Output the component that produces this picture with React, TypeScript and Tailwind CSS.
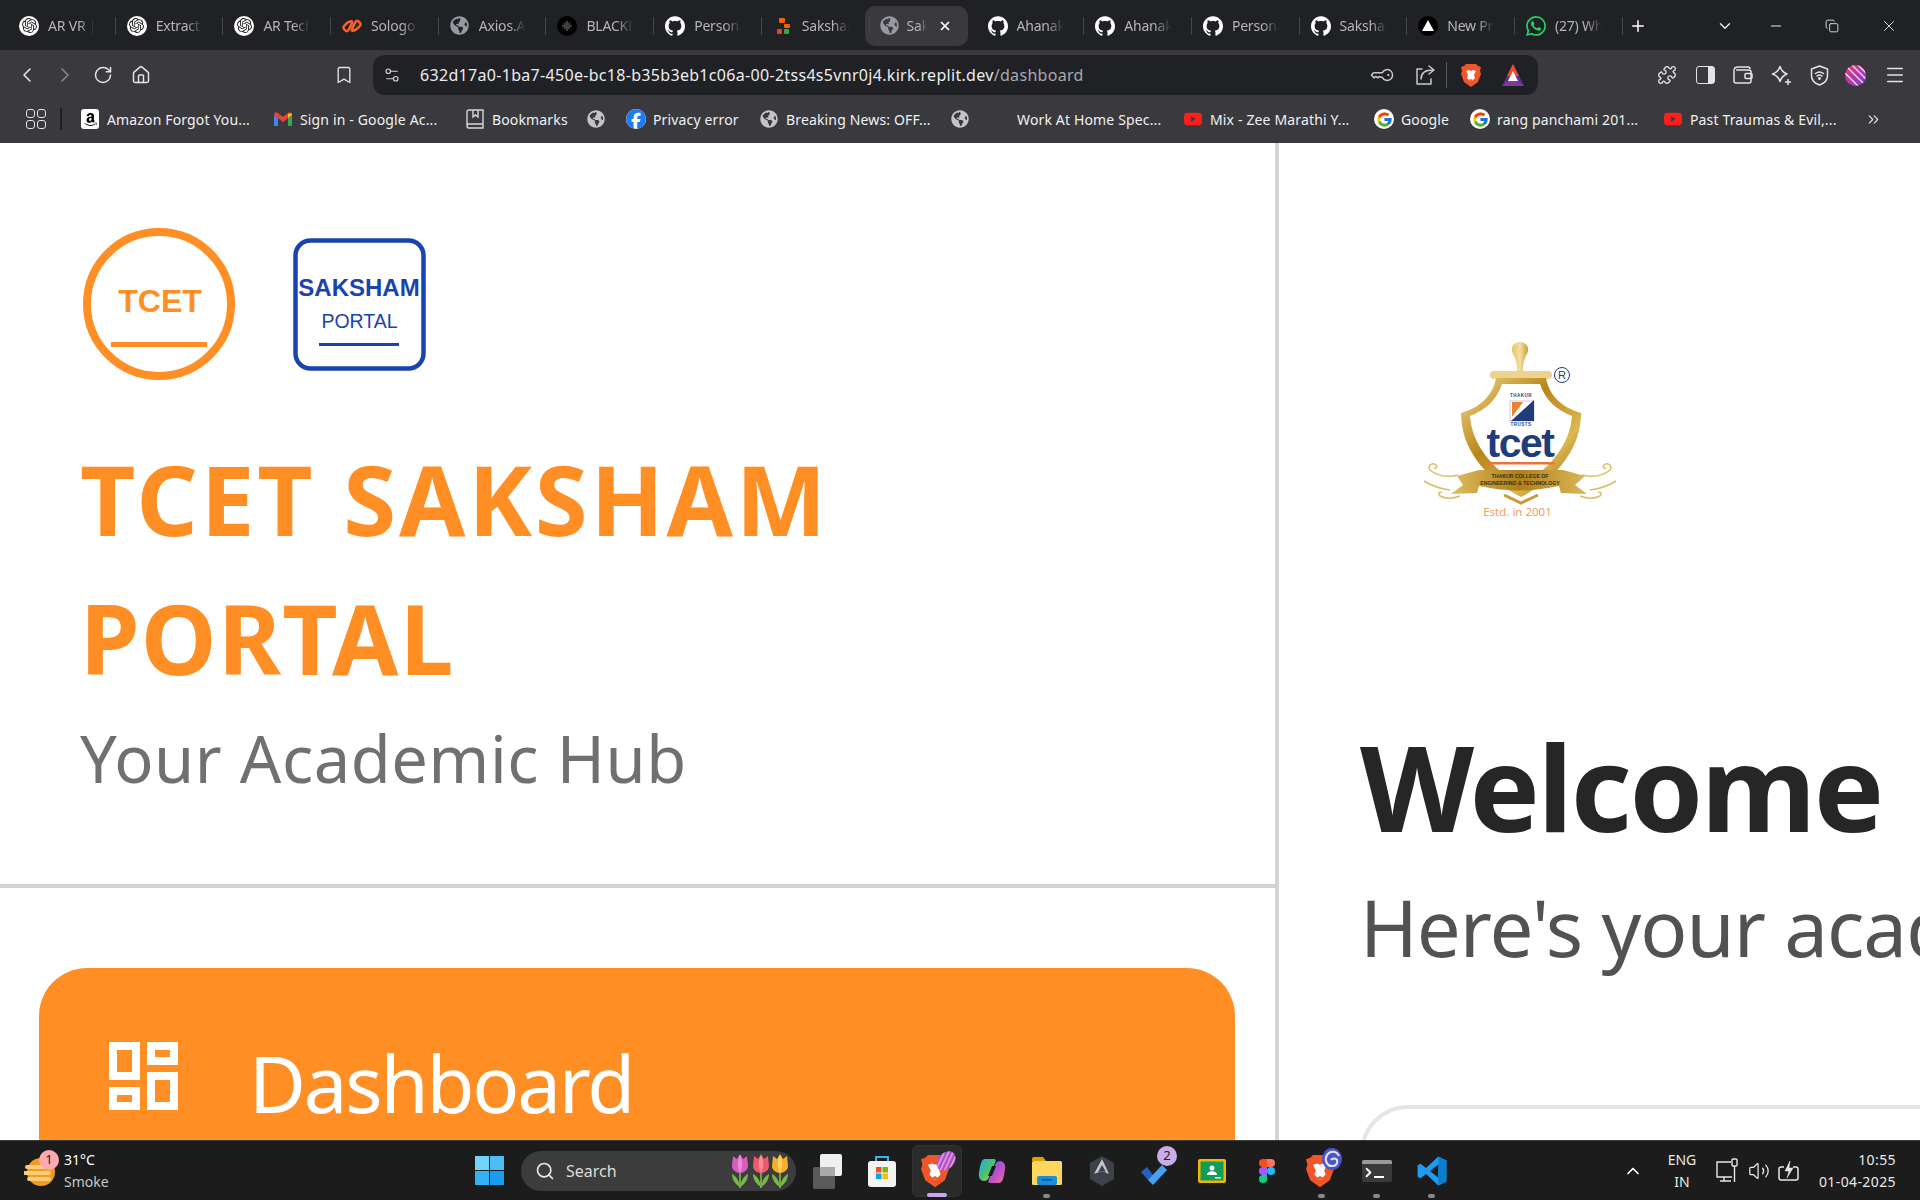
import React from "react";
import {
  ChevronLeft, ChevronRight, RotateCw, Home, Bookmark, Settings2, KeyRound, Puzzle, Menu,
  ChevronsRight, Search, ChevronUp, ChevronDown, Minus, Copy, X, Plus, Volume2,
} from "lucide-react";
import { SiOpenai, SiGithub, SiWhatsapp, SiFacebook, SiYoutube } from "react-icons/si";
import { FaGlobeAmericas, FaAmazon } from "react-icons/fa";
import { FcGoogle } from "react-icons/fc";

const Gpt = () => (
  <span className="w-[20px] h-[20px] rounded-full bg-white flex items-center justify-center">
    <SiOpenai className="w-[15px] h-[15px] text-[#222]" />
  </span>
);
const Git = () => <SiGithub className="w-[20px] h-[20px] text-white" />;
const Globe = ({ c = "text-[#c4c4c6]" }: { c?: string }) => <FaGlobeAmericas className={`w-[18px] h-[18px] ${c}`} />;
const TabGlobe = () => <FaGlobeAmericas className="w-[19px] h-[19px] text-[#949aa2]" />;
const Sologo = () => (
  <svg width="21" height="20" viewBox="0 0 21 20" fill="none" stroke="#f9622a" strokeWidth="2.600">
    <path d="M3 14c-2-1-2-3 0-5s5-4 7-4c1 0 1 1 0 3l-3 6c-1 2-3 2-4 0z" />
    <path d="M18 6c2 1 2 3 0 5s-5 4-7 4c-1 0-1-1 0-3l3-6c1-2 3-2 4 0z" />
  </svg>
);
const Blackbox = () => (
  <svg width="20" height="20" viewBox="0 0 20 20">
    <circle cx="10" cy="10" r="10" fill="#000" />
    {[6, 8, 10, 12, 14].map((x) => [6, 8, 10, 12, 14].map((y) => <circle key={`${x}-${y}`} cx={x} cy={y} r={Math.abs(x - 10) + Math.abs(y - 10) > 5 ? 0.3 : 0.7} fill="#b0b0b0" />))}
  </svg>
);
const Saksha = () => (
  <svg width="20" height="20" viewBox="0 0 20 20">
    <rect x="6" y="2" width="6" height="5" rx="1" fill="#f26207" />
    <rect x="11" y="8" width="6" height="4" rx="1" fill="#f26207" />
    <rect x="4" y="13" width="5" height="5" rx="1" fill="#e8402c" />
    <rect x="11" y="13" width="5" height="5" rx="1" fill="#35a853" />
  </svg>
);
const Vercel = () => (
  <span className="w-[20px] h-[20px] rounded-full bg-black flex items-center justify-center">
    <svg width="12" height="11" viewBox="0 0 12 11"><path d="M6 0l6 11H0z" fill="#fff" /></svg>
  </span>
);
const Whats = () => <SiWhatsapp className="w-[20px] h-[20px] text-[#25d366]" />;

const Lion = ({ s = 20 }: { s?: number }) => (
  <svg width={s} height={s * 1.15} viewBox="0 0 20 23">
    <path d="M5 0h10l2 2 3 1-1 4 1 3-3 8-7 5-7-5-3-8 1-3-1-4 3-1z" fill="#f0562a" />
    <path d="M5 7l3-1 2 1 2-1 3 1-2 4 1 3-4 4-4-4 1-3z" fill="#fff" />
    <path d="M8 16l2-1 2 1-2 2z" fill="#f0562a" />
  </svg>
);
const Bat = () => (
  <svg width="24" height="24" viewBox="0 0 24 24">
    <path d="M12 1 23 23H1z" fill="#6c2a90" />
    <path d="M12 1 18 13H6z" fill="#ef4b2f" />
    <path d="M12 8l5 10H7z" fill="#fff" />
    <path d="M1 23l6-5h10l6 5z" fill="#7b3aa0" />
  </svg>
);
const Avatar = () => (
  <svg width="21" height="21" viewBox="0 0 21 21">
    <defs>
      <linearGradient id="avg" x1="0" y1="0" x2="1" y2="1">
        <stop offset="0" stopColor="#f5307a" />
        <stop offset="1" stopColor="#7a3de0" />
      </linearGradient>
      <clipPath id="avc"><circle cx="10.500" cy="10.500" r="10.500" /></clipPath>
    </defs>
    <circle cx="10.500" cy="10.500" r="10.500" fill="url(#avg)" />
    <g clipPath="url(#avc)" stroke="#f4e6f6" strokeWidth="1.300">
      <path d="M-2 6 15 23M1 1 20 20M6 -1 24 17M11 -2 26 13" />
    </g>
  </svg>
);

const Tab = ({ icon, label }: { icon: React.ReactNode; label: string }) => (
  <div className="relative w-[107.7px] shrink-0 h-[40px] flex items-center pl-[11px]">
    <span className="w-[20px] h-[20px] flex items-center justify-center shrink-0">{icon}</span>
    <span className="ml-[9px] w-[47px] overflow-hidden whitespace-nowrap text-[14px] tracking-[-0.2px] text-[#b5b5b7] [mask-image:linear-gradient(to_right,black_65%,transparent)]">{label}</span>
    <span className="absolute right-0 top-[11px] w-px h-[18px] bg-[#45454a]" />
  </div>
);
const ActiveTab = () => (
  <div className="ml-[-5px] mr-[9px] w-[103px] shrink-0 h-[40px] flex items-center bg-[#3a3a3e] rounded-[10px] pl-[15px]">
    <span className="w-[20px] h-[20px] flex items-center justify-center shrink-0"><TabGlobe /></span>
    <span className="ml-[7px] w-[20px] overflow-hidden whitespace-nowrap text-[14px] tracking-[-0.2px] text-[#b5b5b7] [mask-image:linear-gradient(to_right,black_60%,transparent)]">Saksham</span>
    <X className="ml-[11px] w-[14px] h-[14px] text-white" strokeWidth={3} />
  </div>
);

const TabBar = () => (
  <div className="h-[50px] shrink-0 bg-[#202125] flex items-center pl-[8px] pt-[1px]">
    <Tab icon={<Gpt />} label="AR VR |" />
    <Tab icon={<Gpt />} label="Extract text" />
    <Tab icon={<Gpt />} label="AR Tech stack" />
    <Tab icon={<Sologo />} label="Sologo AI" />
    <Tab icon={<TabGlobe />} label="Axios.Axios" />
    <Tab icon={<Blackbox />} label="BLACKBOX" />
    <Tab icon={<Git />} label="Personal" />
    <Tab icon={<Saksha />} label="Saksham" />
    <ActiveTab />
    <Tab icon={<Git />} label="Ahanak" />
    <Tab icon={<Git />} label="Ahanak" />
    <Tab icon={<Git />} label="Personal" />
    <Tab icon={<Git />} label="Saksham" />
    <Tab icon={<Vercel />} label="New Project" />
    <Tab icon={<Whats />} label="(27) WhatsApp" />
    <Plus className="ml-[6px] w-[18px] h-[18px] text-white" />
    <ChevronDown className="ml-[69px] w-[18px] h-[18px] text-[#e8e8e8]" />
    <Minus className="ml-[34px] w-[16px] h-[16px] text-[#e8e8e8]" strokeWidth={1.5} />
    <Copy className="ml-[41px] w-[14px] h-[14px] text-[#e8e8e8]" strokeWidth={1.5} />
    <X className="ml-[41px] w-[18px] h-[18px] text-[#e8e8e8]" strokeWidth={1.2} />
  </div>
);

const Slot = ({ children }: { children: React.ReactNode }) => (
  <span className="w-[38px] h-[38px] shrink-0 flex items-center justify-center">{children}</span>
);

const ic = "w-[20px] h-[20px] text-[#e4e4e6]";

const ShareOut = () => (
  <svg width="22" height="22" viewBox="0 0 22 22" fill="none" stroke="#c8c8ca" strokeWidth="1.500" strokeLinecap="round" strokeLinejoin="round">
    <path d="M8 5H3v15h14v-5" />
    <path d="M7 15c0-6 4-9 12-9M15 2l5 4-5 4" />
  </svg>
);
const SidePanel = () => (
  <span className="w-[19px] h-[18px] border-[1.5px] border-[#e4e4e6] rounded-[3px] flex justify-end">
    <span className="w-[6px] h-full bg-[#e4e4e6]" />
  </span>
);
const WalletI = () => (
  <svg width="20" height="18" viewBox="0 0 20 18" fill="none" stroke="#e4e4e6" strokeWidth="1.500" strokeLinejoin="round">
    <path d="M1 4.500C1 2 3 1 5 1h10c1.500 0 2 1 2 2" />
    <path d="M1 4.500V15a2 2 0 0 0 2 2h13a2 2 0 0 0 2-2v-9a2 2 0 0 0-2-2H3" />
    <rect x="12" y="7.500" width="7" height="5" rx="1" />
  </svg>
);
const Leo = () => (
  <svg width="21" height="21" viewBox="0 0 21 21" fill="none" stroke="#e4e4e6" strokeWidth="1.500" strokeLinejoin="round">
    <path d="M9 1.500c1.200 4 3 6 7 7.500-4 1.500-5.800 3.500-7 7.500C7.800 12.500 6 10.500 1.500 9 6 7.500 7.800 5.500 9 1.500z" />
    <path d="M17 14v6M14 17h6" />
  </svg>
);
const Vpn = () => (
  <svg width="19" height="21" viewBox="0 0 19 21" fill="none" stroke="#e4e4e6" strokeWidth="1.500" strokeLinecap="round">
    <path d="M9.500 1 17.500 4v6.500c0 4.500-3.500 8-8 9.500-4.500-1.500-8-5-8-9.500V4z" strokeLinejoin="round" />
    <path d="M5.500 8.500c2.500-2 5.500-2 8 0M7 11c1.500-1.200 3.500-1.200 5 0" />
    <circle cx="9.500" cy="13.500" r="0.700" fill="#e4e4e6" />
  </svg>
);

const Toolbar = () => (
  <div className="h-[50px] shrink-0 bg-[#3a3a3e] flex items-center pl-[8px]">
    <Slot><ChevronLeft className="w-[24px] h-[24px] text-[#e4e4e6]" strokeWidth={1.6} /></Slot>
    <Slot><ChevronRight className="w-[24px] h-[24px] text-[#85858a]" strokeWidth={1.6} /></Slot>
    <Slot><RotateCw className={ic} strokeWidth={1.8} /></Slot>
    <Slot><Home className={ic} strokeWidth={1.8} /></Slot>
    <div className="ml-[165px]"><Slot><Bookmark className={ic} strokeWidth={1.6} /></Slot></div>
    <div className="ml-[10px] w-[1165px] h-[40px] bg-[#202125] rounded-[12px] flex items-center relative">
      <Settings2 className="ml-[10px] w-[18px] h-[18px] text-[#d0d0d2]" strokeWidth={1.6} />
      <span className="ml-[19px] text-[16px] tracking-[0.31px] text-[#ececee] whitespace-nowrap">
        632d17a0-1ba7-450e-bc18-b35b3eb1c06a-00-2tss4s5vnr0j4.kirk.replit.dev<span className="text-[#a8a8ac]">/dashboard</span>
      </span>
      <span className="ml-auto flex items-center">
        <KeyRound className="w-[20px] h-[20px] text-[#c8c8ca] rotate-45" strokeWidth={1.8} />
        <span className="ml-[21px] flex"><ShareOut /></span>
        <span className="ml-[10px] w-px h-[26px] bg-[#55555a]" />
        <span className="ml-[14px] flex"><Lion s={20} /></span>
        <span className="ml-[20px] mr-[13px] flex"><Bat /></span>
      </span>
    </div>
    <div className="ml-[110px] flex">
      <Slot><Puzzle className={ic} strokeWidth={1.6} /></Slot>
      <Slot><SidePanel /></Slot>
      <Slot><WalletI /></Slot>
      <Slot><Leo /></Slot>
      <Slot><Vpn /></Slot>
      <span className="-ml-[2px] mr-[2px]"><Slot><Avatar /></Slot></span>
      <Slot><Menu className="w-[22px] h-[22px] text-[#e4e4e6]" strokeWidth={1.6} /></Slot>
    </div>
  </div>
);

const Yt = () => <SiYoutube className="w-[18px] h-[18px] text-[#ff1f1f]" />;
const G = () => (
  <span className="w-[20px] h-[20px] rounded-full bg-white flex items-center justify-center"><FcGoogle className="w-[17px] h-[17px]" /></span>
);
const Amazon = () => (
  <span className="w-[18px] h-[20px] rounded-[3px] bg-white flex items-center justify-center"><FaAmazon className="w-[15px] h-[15px] text-black" /></span>
);
const Gm = () => (
  <svg width="18" height="14" viewBox="0 0 18 14">
    <path d="M0 3v10a1 1 0 0 0 1 1h3V6z" fill="#4285f4" />
    <path d="M18 3v10a1 1 0 0 1-1 1h-3V6z" fill="#34a853" />
    <path d="M0 3l4 3 5 4 5-4 4-3c0-2.400-2-3.400-3.500-2.200L9 5 3.500 .8C2 -.4 0 .6 0 3z" fill="#ea4335" />
    <path d="M14 6V1.700L18 1.500V3z" fill="#fbbc04" />
  </svg>
);

const Mark = ({ icon, label, w }: { icon?: React.ReactNode; label?: string; w: string }) => (
  <div className={`${w} shrink-0 flex items-center h-full overflow-hidden`}>
    {icon && <span className="w-[20px] h-[20px] mr-[7px] flex items-center justify-center shrink-0">{icon}</span>}
    {label && <span className="text-[14px] tracking-[0.15px] text-[#f0f0f2] whitespace-nowrap">{label}</span>}
  </div>
);

const BookmarkBox = () => (
  <svg width="20" height="20" viewBox="0 0 20 20" fill="none" stroke="#d8d8da" strokeWidth="1.400">
    <path d="M2 16V3a2 2 0 0 1 2-2h14v14H4a2 2 0 0 0 0 4h14v-4" />
    <path d="M8 1v7l2.500-2L13 8V1" />
  </svg>
);

const Bookmarks = () => (
  <div className="h-[43px] shrink-0 bg-[#3a3a3e] flex items-center pl-[26px] pb-[5px]">
    <div className="grid grid-cols-2 gap-[2px] w-[20px] h-[20px] mr-[14px]">
      <span className="border-[1.5px] border-[#e4e4e6] rounded-[3px]" />
      <span className="border-[1.5px] border-[#e4e4e6] rounded-[3px]" />
      <span className="border-[1.5px] border-[#e4e4e6] rounded-[3px]" />
      <span className="border-[1.5px] border-[#e4e4e6] rounded-[3px]" />
    </div>
    <span className="w-[2px] h-[22px] bg-[#1e1e20] mr-[18px]" />
    <Mark w="w-[193px]" icon={<Amazon />} label="Amazon Forgot You..." />
    <Mark w="w-[192px]" icon={<Gm />} label="Sign in - Google Ac..." />
    <Mark w="w-[121px]" icon={<BookmarkBox />} label="Bookmarks" />
    <Mark w="w-[40px]" icon={<Globe />} />
    <Mark w="w-[133px]" icon={<SiFacebook className="w-[20px] h-[20px] text-[#1b7cf2] bg-white rounded-full" />} label="Privacy error" />
    <Mark w="w-[191px]" icon={<Globe />} label="Breaking News: OFF..." />
    <Mark w="w-[67px]" icon={<Globe />} />
    <Mark w="w-[166px]" label="Work At Home Spec..." />
    <Mark w="w-[191px]" icon={<Yt />} label="Mix - Zee Marathi Y..." />
    <Mark w="w-[96px]" icon={<G />} label="Google" />
    <Mark w="w-[193px]" icon={<G />} label="rang panchami 201..." />
    <Mark w="w-[202px]" icon={<Yt />} label="Past Traumas & Evil,..." />
    <ChevronsRight className="w-[17px] h-[17px] text-[#e4e4e6]" strokeWidth={1.6} />
  </div>
);

const TcetLogo = () => (
  <svg width="152" height="152" viewBox="0 0 152 152">
    <circle cx="76" cy="76" r="72" fill="#fff" stroke="#ff8f24" strokeWidth="8" />
    <text x="77" y="84" textAnchor="middle" fontFamily="'Liberation Sans', sans-serif" fontWeight="700" fontSize="32" fill="#ff8f24">TCET</text>
    <rect x="28" y="114" width="96" height="5" fill="#ff8f24" />
  </svg>
);
const SakshamLogo = () => (
  <svg width="133" height="133" viewBox="0 0 133 133">
    <rect x="2.500" y="2.500" width="128" height="128" rx="15" fill="#fff" stroke="#1a44ad" strokeWidth="4.500" />
    <text x="66" y="58" textAnchor="middle" fontFamily="'Liberation Sans', sans-serif" fontWeight="700" fontSize="24" fill="#1a44ad">SAKSHAM</text>
    <text x="66.500" y="90" textAnchor="middle" fontFamily="'Liberation Sans', sans-serif" fontSize="19.500" fill="#1a44ad">PORTAL</text>
    <rect x="26" y="105" width="80" height="3" fill="#1a44ad" />
  </svg>
);

const Crest = () => (
  <svg width="240" height="200" viewBox="0 0 240 200">
    <defs>
      <linearGradient id="gold" x1="0" y1="0" x2="1" y2="1">
        <stop offset="0" stopColor="#f2d98c" />
        <stop offset="0.4" stopColor="#b98518" />
        <stop offset="0.7" stopColor="#dcb84e" />
        <stop offset="1" stopColor="#8f6210" />
      </linearGradient>
      <linearGradient id="rib" x1="0" y1="0" x2="1" y2="0">
        <stop offset="0" stopColor="#e0bd60" />
        <stop offset="0.5" stopColor="#ae7f18" />
        <stop offset="1" stopColor="#dcb858" />
      </linearGradient>
      <linearGradient id="fin" x1="0" y1="0" x2="1" y2="0">
        <stop offset="0" stopColor="#e6c66e" />
        <stop offset="0.5" stopColor="#f2dfa0" />
        <stop offset="1" stopColor="#c89c3a" />
      </linearGradient>
    </defs>
    <path d="M120 12c6 0 9 5 8 9-1 5-5 7-5 20h-6c0-13-4-15-5-20-1-4 2-9 8-9z" fill="url(#fin)" />
    <rect x="90" y="41" width="62" height="8" rx="4" fill="#ecd28e" />
    <path d="M96 48h50c3 17 15 29 35 35 0 34-22 64-60 84-38-20-60-50-60-84 20-6 32-18 35-35z" fill="url(#gold)" />
    <path d="M102 54h38c5 15 16 26 32 32-2 27-20 52-51 69-31-17-49-42-51-69 16-6 27-17 32-32z" fill="#fff" />
    <rect x="110" y="71" width="24" height="20" fill="#fff" stroke="#8a9ac0" strokeWidth="0.5" />
    <path d="M134 70v21h-23z" fill="#1f3d7a" />
    <path d="M112 72h11l-5 7-6 8z" fill="#f08030" />
    <text x="121" y="67" textAnchor="middle" fontFamily="'Liberation Sans', sans-serif" fontWeight="700" fontSize="4.500" letterSpacing="0.5" fill="#1f3d7a">THAKUR</text>
    <text x="121" y="95.500" textAnchor="middle" fontFamily="'Liberation Sans', sans-serif" fontWeight="700" fontSize="4.500" letterSpacing="0.5" fill="#1f3d7a">TRUSTS</text>
    <text x="120" y="127" textAnchor="middle" fontFamily="'Liberation Sans', sans-serif" fontWeight="700" fontSize="41" letterSpacing="-1.500" fill="#1f3d7a">tcet</text>
    <rect x="87" y="132" width="68" height="2.500" fill="#e8743a" />
    <path d="M57 146l22-6 84 0 22 6-10 9 12 9-26-1-2-7c-30 6-50 6-80 0l-2 7-26 1 12-9z" fill="url(#rib)" />
    <path d="M104 165l17 8 17-8" fill="none" stroke="#c89a38" strokeWidth="3" />
    <text x="120" y="148" textAnchor="middle" fontFamily="'Liberation Sans', sans-serif" fontWeight="700" fontSize="5.200" fill="#3a2e10">THAKUR COLLEGE OF</text>
    <text x="120" y="155" textAnchor="middle" fontFamily="'Liberation Sans', sans-serif" fontWeight="700" fontSize="5.200" fill="#3a2e10">ENGINEERING &amp; TECHNOLOGY</text>
    <path d="M58 145c-12 3-22 0-28-5-3-5 3-8 6-5 2 2 0 4-2 3M50 160c-8-1-18-4-26-9M60 166c-8 3-14 3-20 0-3-2 0-5 2-3" fill="none" stroke="#dcbc68" strokeWidth="1.500" />
    <path d="M182 145c12 3 22 0 28-5 3-5-3-8-6-5-2 2 0 4 2 3M190 160c8-1 18-4 26-9M180 166c8 3 14 3 20 0 3-2 0-5-2-3" fill="none" stroke="#dcbc68" strokeWidth="1.500" />
    <circle cx="162" cy="45" r="7.500" fill="#fff" stroke="#1f3d7a" strokeWidth="1" />
    <text x="162" y="49" textAnchor="middle" fontFamily="'Liberation Sans', sans-serif" fontSize="11" fill="#1f3d7a">R</text>
    <text x="117.500" y="186" textAnchor="middle" fontFamily="'Noto Sans', sans-serif" fontSize="11.500" fill="#f79a64">Estd. in 2001</text>
  </svg>
);

const DashIcon = () => (
  <svg width="69" height="68" viewBox="0 0 69 68" fill="none" stroke="#fff" strokeWidth="8">
    <rect x="4" y="4" width="23" height="30" />
    <rect x="42" y="4" width="23" height="15" />
    <rect x="42" y="34" width="23" height="30" />
    <rect x="4" y="49" width="23" height="15" />
  </svg>
);

const LeftPane = () => (
  <aside className="w-[1279px] shrink-0 border-r-4 border-[#d4d4d4]">
    <div className="h-[745px] border-b-4 border-[#d4d4d4] pl-[80px] pt-[85px]">
      <div className="flex items-center gap-[58px] ml-[3px]">
        <TcetLogo />
        <SakshamLogo />
      </div>
      <h1 className="mt-[49px] text-[96px] leading-[139px] font-bold text-[#ff8f24]">
        <span className="tracking-[2.8px]">TCET SAKSHAM</span><br />
        <span className="tracking-[1.2px]">PORTAL</span>
      </h1>
      <p className="mt-[11px] text-[65px] leading-[80px] tracking-[0.6px] text-[#707070]">Your Academic Hub</p>
    </div>
    <nav className="pl-[39px] pr-[40px] pt-[80px]">
      <div className="h-[400px] bg-[#ff8f24] rounded-[48px] flex items-start pl-[70px] pt-[74px] text-white">
        <DashIcon />
        <span className="ml-[71px] mt-[-9px] text-[78px] leading-[100px] tracking-[-2.2px]">Dashboard</span>
      </div>
    </nav>
  </aside>
);

const RightPane = () => (
  <main className="flex-1 min-w-0 overflow-hidden pl-[81px]">
    <div className="ml-[40px] mt-[187px]"><Crest /></div>
    <h2 className="mt-[187px] text-[118px] leading-[140px] font-bold tracking-[-2.2px] text-[#262626] whitespace-nowrap">Welcome</h2>
    <p className="mt-[20px] text-[78px] leading-[100px] tracking-[-1px] text-[#525252] whitespace-nowrap">Here's your academic overview</p>
    <div className="mt-[128px] w-[1000px] h-[400px] border-4 border-[#e5e5e5] rounded-[48px]" />
  </main>
);

const TSlot = ({ children, dot }: { children: React.ReactNode; dot?: boolean }) => (
  <div className="relative w-[55px] h-[52px] shrink-0 flex items-center justify-center">
    {children}
    {dot && <span className="absolute bottom-[-1px] w-[7px] h-[4px] rounded-full bg-[#8a8a8a]" />}
  </div>
);

const Tulip = ({ c, d, x }: { c: string; d: string; x: number }) => (
  <g transform={`translate(${x} 0)`}>
    <path d="M10 14v20" stroke="#6aa83a" strokeWidth="2" />
    <path d="M10 33c-4-2-8-7-8-13 4 2 7 6 8 13zM10 33c4-2 8-7 8-13-4 2-7 6-8 13z" fill="#7ab648" />
    <path d="M3 2l4 3 3-5 3 5 4-3 1 10c0 4-4 7-8 7s-8-3-8-7z" fill={c} />
    <path d="M10 1c3 5 3 12 0 18-3-6-3-13 0-18z" fill={d} />
  </g>
);

const Badge = ({ n, c, cls }: { n: string; c: string; cls: string }) => (
  <span className={`absolute w-[20px] h-[20px] rounded-full flex items-center justify-center text-[13px] text-[#222] ${c} ${cls}`}>{n}</span>
);

const Taskbar = () => (
  <div className="h-[60px] shrink-0 bg-[#1c1c1c] border-t border-[#3a3a3a] flex items-center text-white">
    <div className="relative w-[64px] h-full shrink-0">
      <svg className="absolute left-[24px] top-[14px]" width="32" height="34" viewBox="0 0 32 34">
        <circle cx="17" cy="17" r="14" fill="#f59a1c" />
        <path d="M3 12h22M1 18h24M5 24h20" stroke="#f5cf7c" strokeWidth="4" strokeLinecap="round" />
      </svg>
      <Badge n="1" c="bg-[#ffa8b0]" cls="left-[39px] top-[9px]" />
    </div>
    <div className="w-[400px] shrink-0 leading-[22px]">
      <div className="text-[14px]">31°C</div>
      <div className="text-[14px] text-[#c8c8c8]">Smoke</div>
    </div>
    <svg width="29" height="29" viewBox="0 0 29 29" className="ml-[11px]">
      <rect x="0" y="0" width="14" height="14" fill="#6fd3fb" />
      <rect x="15" y="0" width="14" height="14" fill="#4dbdf5" />
      <rect x="0" y="15" width="14" height="14" fill="#34b1f3" />
      <rect x="15" y="15" width="14" height="14" fill="#1a9cf0" />
    </svg>
    <div className="ml-[17px] w-[275px] h-[40px] shrink-0 rounded-full bg-[#3c3c3c] flex items-center pl-[14px]">
      <Search className="w-[20px] h-[20px] text-[#e8e8e8]" strokeWidth={2} />
      <span className="ml-[11px] text-[16px] text-[#dcdcdc]">Search</span>
      <svg width="60" height="34" viewBox="0 0 60 34" className="ml-auto mr-[6px]">
        <Tulip c="#d85cc0" d="#f08ad8" x="0" />
        <Tulip c="#ee5a6a" d="#f8909a" x="21" />
        <Tulip c="#f4b02c" d="#fbd060" x="40" />
      </svg>
    </div>
    <div className="ml-[3px] flex items-center">
      <TSlot>
        <svg width="30" height="36" viewBox="0 0 30 36">
          <rect x="1" y="14" width="22" height="22" rx="2" fill="#5a5a5a" />
          <rect x="8" y="1" width="22" height="22" rx="2" fill="#f0f0f0" />
          <rect x="8" y="14" width="15" height="9" fill="#a9a9a9" />
        </svg>
      </TSlot>
      <TSlot>
        <svg width="30" height="34" viewBox="0 0 30 34">
          <path d="M9 8V3h12v5" fill="none" stroke="#37b5f0" strokeWidth="2" />
          <rect x="1" y="7" width="28" height="26" rx="3" fill="#f4f4f4" />
          <rect x="9" y="13" width="5.500" height="5.500" fill="#f25022" />
          <rect x="15.500" y="13" width="5.500" height="5.500" fill="#7fba00" />
          <rect x="9" y="19.500" width="5.500" height="5.500" fill="#00a4ef" />
          <rect x="15.500" y="19.500" width="5.500" height="5.500" fill="#ffb900" />
        </svg>
      </TSlot>
      <div className="relative w-[50px] mx-[2.5px] h-[52px] shrink-0 flex items-center justify-center rounded-[6px] bg-[#2a2a2a] border border-[#333]">
        <span className="-ml-[4px] mt-[2px] flex"><Lion s={28} /></span>
        <svg className="absolute right-[4px] top-[4px]" width="22" height="22" viewBox="0 0 22 22">
          <defs>
            <pattern id="st2" width="4" height="4" patternUnits="userSpaceOnUse" patternTransform="rotate(-20)">
              <rect width="4" height="4" fill="#a84fd0" /><rect width="4" height="1.500" fill="#f0a8d0" />
            </pattern>
          </defs>
          <ellipse cx="11" cy="11" rx="11" ry="8" transform="rotate(-45 11 11)" fill="url(#st2)" />
        </svg>
        <span className="absolute bottom-[-1px] w-[20px] h-[4px] rounded-full bg-[#c9a7e8]" />
      </div>
      <TSlot>
        <svg width="28" height="26" viewBox="0 0 28 26">
          <defs>
            <linearGradient id="cp1" x1="0" y1="0" x2="1" y2="1">
              <stop offset="0" stopColor="#22a8e8" /><stop offset="0.55" stopColor="#4ec46a" /><stop offset="1" stopColor="#f5c030" />
            </linearGradient>
            <linearGradient id="cp2" x1="0" y1="0" x2="1" y2="1">
              <stop offset="0" stopColor="#3a7be8" /><stop offset="0.5" stopColor="#b84ed0" /><stop offset="1" stopColor="#f0708a" />
            </linearGradient>
          </defs>
          <path d="M7 1h9c2 0 2 2 1 4L11 19c-1 3-3 4-5 4-3 0-6-3-5-8C2 8 3 1 7 1z" fill="url(#cp1)" />
          <path d="M21 25h-9c-2 0-2-2-1-4l6-14c1-3 3-4 5-4 3 0 6 3 5 8-1 7-2 14-6 14z" fill="url(#cp2)" />
          <path d="M14 8l-4 10h4l4-10z" fill="#1c1c1c" />
        </svg>
      </TSlot>
      <TSlot dot>
        <svg width="30" height="28" viewBox="0 0 30 28">
          <path d="M0 2a2 2 0 0 1 2-2h9l3 4H0z" fill="#e0a000" />
          <rect x="0" y="4" width="30" height="24" rx="1.500" fill="#ffd75e" />
          <rect x="5" y="19" width="20" height="9" rx="2" fill="#1a8ddb" />
          <rect x="10" y="22" width="10" height="1.500" fill="#0a4a80" />
        </svg>
      </TSlot>
      <TSlot>
        <svg width="26" height="30" viewBox="0 0 26 30">
          <path d="M13 0l12 7v16l-12 7-12-7V7z" fill="#3e4147" />
          <path d="M13 3 5 18l8-3 7 3z" fill="#c4c8ce" />
          <path d="M13 9l-4 7 4-1 4 1z" fill="#3e4147" />
        </svg>
      </TSlot>
      <TSlot>
        <svg width="26" height="24" viewBox="0 0 26 24" className="-ml-[6px] mt-[4px]">
          <path d="M0 11l6-5 6 8-5 5z" fill="#2160c4" />
          <path d="M7 19l5 5L26 9l-5-5z" fill="#46a0f0" />
        </svg>
        <Badge n="2" c="bg-[#c8aee8]" cls="right-[7px] top-[1px]" />
      </TSlot>
      <TSlot>
        <svg width="28" height="24" viewBox="0 0 28 24">
          <rect width="28" height="24" rx="2" fill="#f4b400" />
          <rect x="2.500" y="2.500" width="23" height="19" fill="#0f9d58" />
          <circle cx="14" cy="9" r="2.500" fill="#fff" />
          <path d="M9 16c0-5 10-5 10 0z" fill="#fff" />
          <rect x="17" y="18" width="6" height="1.500" fill="#fff" />
        </svg>
      </TSlot>
      <TSlot>
        <svg width="16" height="24" viewBox="0 0 16 24">
          <path d="M0 4a4 4 0 0 1 4-4h4v8H4a4 4 0 0 1-4-4z" fill="#f24e1e" />
          <path d="M8 0h4a4 4 0 0 1 0 8H8z" fill="#ff7262" />
          <path d="M0 12a4 4 0 0 1 4-4h4v8H4a4 4 0 0 1-4-4z" fill="#a259ff" />
          <circle cx="12" cy="12" r="4" fill="#1abcfe" />
          <path d="M0 20a4 4 0 0 1 4-4h4v4a4 4 0 0 1-8 0z" fill="#0acf83" />
        </svg>
      </TSlot>
      <TSlot dot>
        <span className="-ml-[4px] mt-[2px] flex"><Lion s={28} /></span>
        <svg className="absolute right-[7px] top-[3px]" width="20" height="22" viewBox="0 0 20 22" fill="none">
          <ellipse cx="10" cy="11" rx="10" ry="11" fill="#4a55c8" />
          <path d="M17 8c-2-5-9-6-12-1s0 12 6 11c3 0 5-3 4-6-1-2-5-2-6 0" stroke="#e6e8ff" strokeWidth="2" />
        </svg>
      </TSlot>
      <TSlot dot>
        <span className="w-[30px] h-[22px] rounded-[2px] bg-[#3a3a3a] overflow-hidden block relative">
          <span className="block h-[4px] bg-[#9a9a9a]" />
          <ChevronRight className="absolute left-[-1px] top-[5px] w-[15px] h-[15px] text-white" strokeWidth={3} />
          <span className="absolute left-[12px] top-[16px] w-[10px] h-[2px] bg-white" />
        </span>
      </TSlot>
      <TSlot dot>
        <svg width="30" height="30" viewBox="0 0 100 100">
          <path d="M71 2 98 15v70L71 98 30 60 12 74 2 69V31l10-5 18 14z" fill="#1f9cf0" />
          <path d="M71 28 43 50l28 22z" fill="#1c1c1c" />
          <path d="M71 2 98 15v70L71 98z" fill="#0a7fd0" />
        </svg>
      </TSlot>
    </div>
    <ChevronUp className="ml-[164px] w-[20px] h-[20px] text-white" strokeWidth={2} />
    <div className="ml-[14px] w-[50px] text-center text-[14px] leading-[22px] text-[#e8e8e8]">ENG<br />IN</div>
    <svg width="24" height="26" viewBox="0 0 24 26" fill="none" stroke="#e8e8e8" strokeWidth="1.400" className="ml-[9px]">
      <path d="M15 4H1v15h15M8 19v4M4 23h11" />
      <rect x="16" y="1" width="5" height="7" rx="1" />
      <path d="M18.500 8v16" />
    </svg>
    <Volume2 className="ml-[8px] w-[22px] h-[22px] text-[#e8e8e8]" strokeWidth={1.4} />
    <svg width="22" height="22" viewBox="0 0 22 22" fill="none" stroke="#e8e8e8" strokeWidth="1.500" className="ml-[8px]">
      <path d="M6 7H3a2 2 0 0 0-2 2v9a2 2 0 0 0 2 2h15a2 2 0 0 0 2-2V9a2 2 0 0 0-2-2h-3" />
      <path d="M12 1 7 11h4l-2 7 6-10h-4z" fill="#e8e8e8" strokeWidth="0.500" />
    </svg>
    <div className="ml-auto mr-[24px] text-right text-[14px] leading-[22px] tracking-[0.4px] text-[#e8e8e8]">
      <div>10:55</div>
      <div>01-04-2025</div>
    </div>
  </div>
);

export default function App() {
  return (
    <div className="w-[1920px] h-[1200px] flex flex-col overflow-hidden bg-white font-['Noto_Sans',sans-serif]">
      <TabBar />
      <Toolbar />
      <Bookmarks />
      <div className="flex-1 min-h-0 flex overflow-hidden">
        <LeftPane />
        <RightPane />
      </div>
      <Taskbar />
    </div>
  );
}
